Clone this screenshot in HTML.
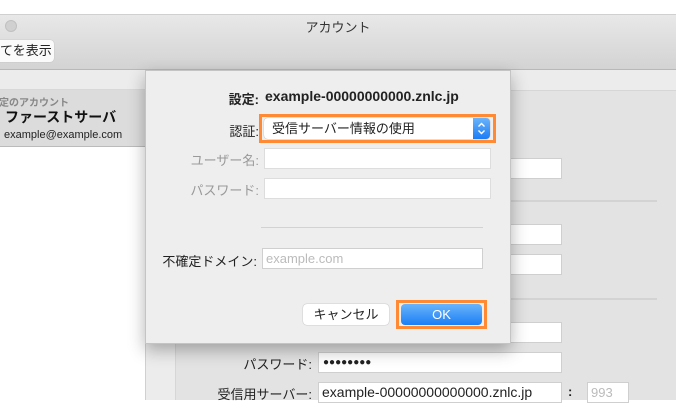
<!DOCTYPE html>
<html><head><meta charset="utf-8"><style>
*{margin:0;padding:0;box-sizing:border-box}
body{width:676px;height:400px;overflow:hidden;position:relative;background:#fff;font-family:"Liberation Sans","Noto Sans CJK JP",sans-serif;font-size:13px;color:#222}
.a{position:absolute}
.fld{position:absolute;background:#fff;border:1px solid #cfcfcf}
.lbl{position:absolute;text-align:right;font-size:13px}
</style></head><body>
<div class="a" style="left:0;top:0;width:676px;height:14px;background:#fff"></div>
<div class="a" style="left:0;top:14px;width:676px;height:56px;background:linear-gradient(#e8e8e8,#d3d3d3);border-top:1px solid #d0d0d0;border-bottom:1px solid #b8b8b8"></div>
<div class="a" style="left:5px;top:20px;width:12px;height:12px;border-radius:50%;background:#d0d0d0;border:1px solid #c0c0c0"></div>
<div class="a" style="left:0;top:17px;width:676px;text-align:center;font-size:13px;color:#333">アカウント</div>
<div class="a" style="left:-6px;top:40px;width:60px;height:22px;background:#fafafa;border-radius:4px;box-shadow:0 0 1px #aaa;font-size:13px;line-height:22px;padding-left:6px">てを表示</div>
<div class="a" style="left:0;top:70px;width:145px;height:330px;background:#fff"></div>
<div class="a" style="left:0;top:70px;width:145px;height:20px;background:#ececec;border-bottom:1px solid #d8d8d8"></div>
<div class="a" style="left:0;top:90px;width:145px;height:57px;background:#dcdcdc;border-bottom:1px solid #bbb"></div>
<div class="a" style="left:-1px;top:94px;font-size:10px;color:#888;font-weight:bold">定のアカウント</div>
<div class="a" style="left:5px;top:107px;font-size:14px;font-weight:bold;color:#111">ファーストサーバ</div>
<div class="a" style="left:4px;top:129px;font-size:11px;color:#222">example@example.com</div>
<div class="a" style="left:145px;top:70px;width:531px;height:330px;background:#ececec;border-left:1px solid #d0d0d0"></div>
<div class="a" style="left:175px;top:90px;width:501px;height:310px;background:#e3e3e3;border-top:1px solid #d6d6d6;border-left:1px solid #d6d6d6"></div>
<div class="a" style="left:510px;top:200px;width:147px;height:2px;background:#d3d3d3"></div>
<div class="a" style="left:510px;top:298px;width:147px;height:2px;background:#d3d3d3"></div>
<div class="fld" style="left:500px;top:158px;width:62px;height:21px"></div>
<div class="fld" style="left:500px;top:224px;width:62px;height:21px"></div>
<div class="fld" style="left:500px;top:254px;width:62px;height:21px"></div>
<div class="fld" style="left:500px;top:322px;width:62px;height:21px"></div>
<div class="lbl" style="left:200px;top:354px;width:112px">パスワード:</div>
<div class="fld" style="left:318px;top:352px;width:244px;height:21px;font-size:10px;line-height:19px;padding-left:4px;letter-spacing:0">●●●●●●●●</div>
<div class="lbl" style="left:200px;top:384px;width:112px">受信用サーバー:</div>
<div class="fld" style="left:318px;top:382px;width:244px;height:21px;font-size:14px;line-height:19px;padding-left:3px">example-00000000000000.znlc.jp</div>
<div class="a" style="left:568px;top:384px;font-weight:bold">:</div>
<div class="fld" style="left:587px;top:382px;width:42px;height:21px;color:#bbb;padding-left:3px;line-height:19px;font-size:13px">993</div>
<div class="a" style="left:145px;top:70px;width:366px;height:274px;background:#eeeeee;border:1px solid #c4c4c4;box-shadow:0 6px 16px rgba(0,0,0,.3)"></div>
<div class="lbl" style="left:150px;top:89px;width:109px;font-weight:bold">設定:</div>
<div class="a" style="left:265px;top:88px;font-size:14px;font-weight:bold;color:#222">example-00000000000.znlc.jp</div>
<div class="a" style="left:259px;top:114px;width:237px;height:29px;border:3px solid #ff8a33"></div>
<div class="lbl" style="left:150px;top:121px;width:109px">認証:</div>
<div class="a" style="left:264px;top:118px;width:226px;height:21px;background:#fff;border-radius:4px;box-shadow:0 0 1px #888;padding-left:8px;line-height:21px;font-size:13px">受信サーバー情報の使用</div>
<div class="a" style="left:473px;top:118px;width:17px;height:21px;border-radius:0 4px 4px 0;background:linear-gradient(#6cb3fa,#1a7cf5)"><svg width="17" height="21"><path d="M5.5 8.5L8.5 5.5L11.5 8.5M5.5 12.5L8.5 15.5L11.5 12.5" fill="none" stroke="#fff" stroke-width="1.4"/></svg></div>
<div class="lbl" style="left:150px;top:150px;width:109px;color:#999">ユーザー名:</div>
<div class="fld" style="left:264px;top:148px;width:227px;height:21px;border-color:#ddd"></div>
<div class="lbl" style="left:150px;top:180px;width:109px;color:#999">パスワード:</div>
<div class="fld" style="left:264px;top:178px;width:227px;height:21px;border-color:#ddd"></div>
<div class="a" style="left:261px;top:227px;width:222px;height:1px;background:#d2d2d2"></div>
<div class="lbl" style="left:150px;top:251px;width:107px">不確定ドメイン:</div>
<div class="fld" style="left:262px;top:248px;width:221px;height:21px;color:#bbb;padding-left:3px;line-height:19px">example.com</div>
<div class="a" style="left:303px;top:304px;width:86px;height:21px;background:#fff;border-radius:4px;box-shadow:0 0 1px #888;text-align:center;line-height:21px;font-size:13px">キャンセル</div>
<div class="a" style="left:396px;top:300px;width:91px;height:29px;border:3px solid #ff8a33"></div>
<div class="a" style="left:401px;top:304px;width:81px;height:21px;background:linear-gradient(#6ab4fb,#1b7ef5);border-radius:4px;color:#fff;text-align:center;line-height:21px;font-size:13px">OK</div>
</body></html>
